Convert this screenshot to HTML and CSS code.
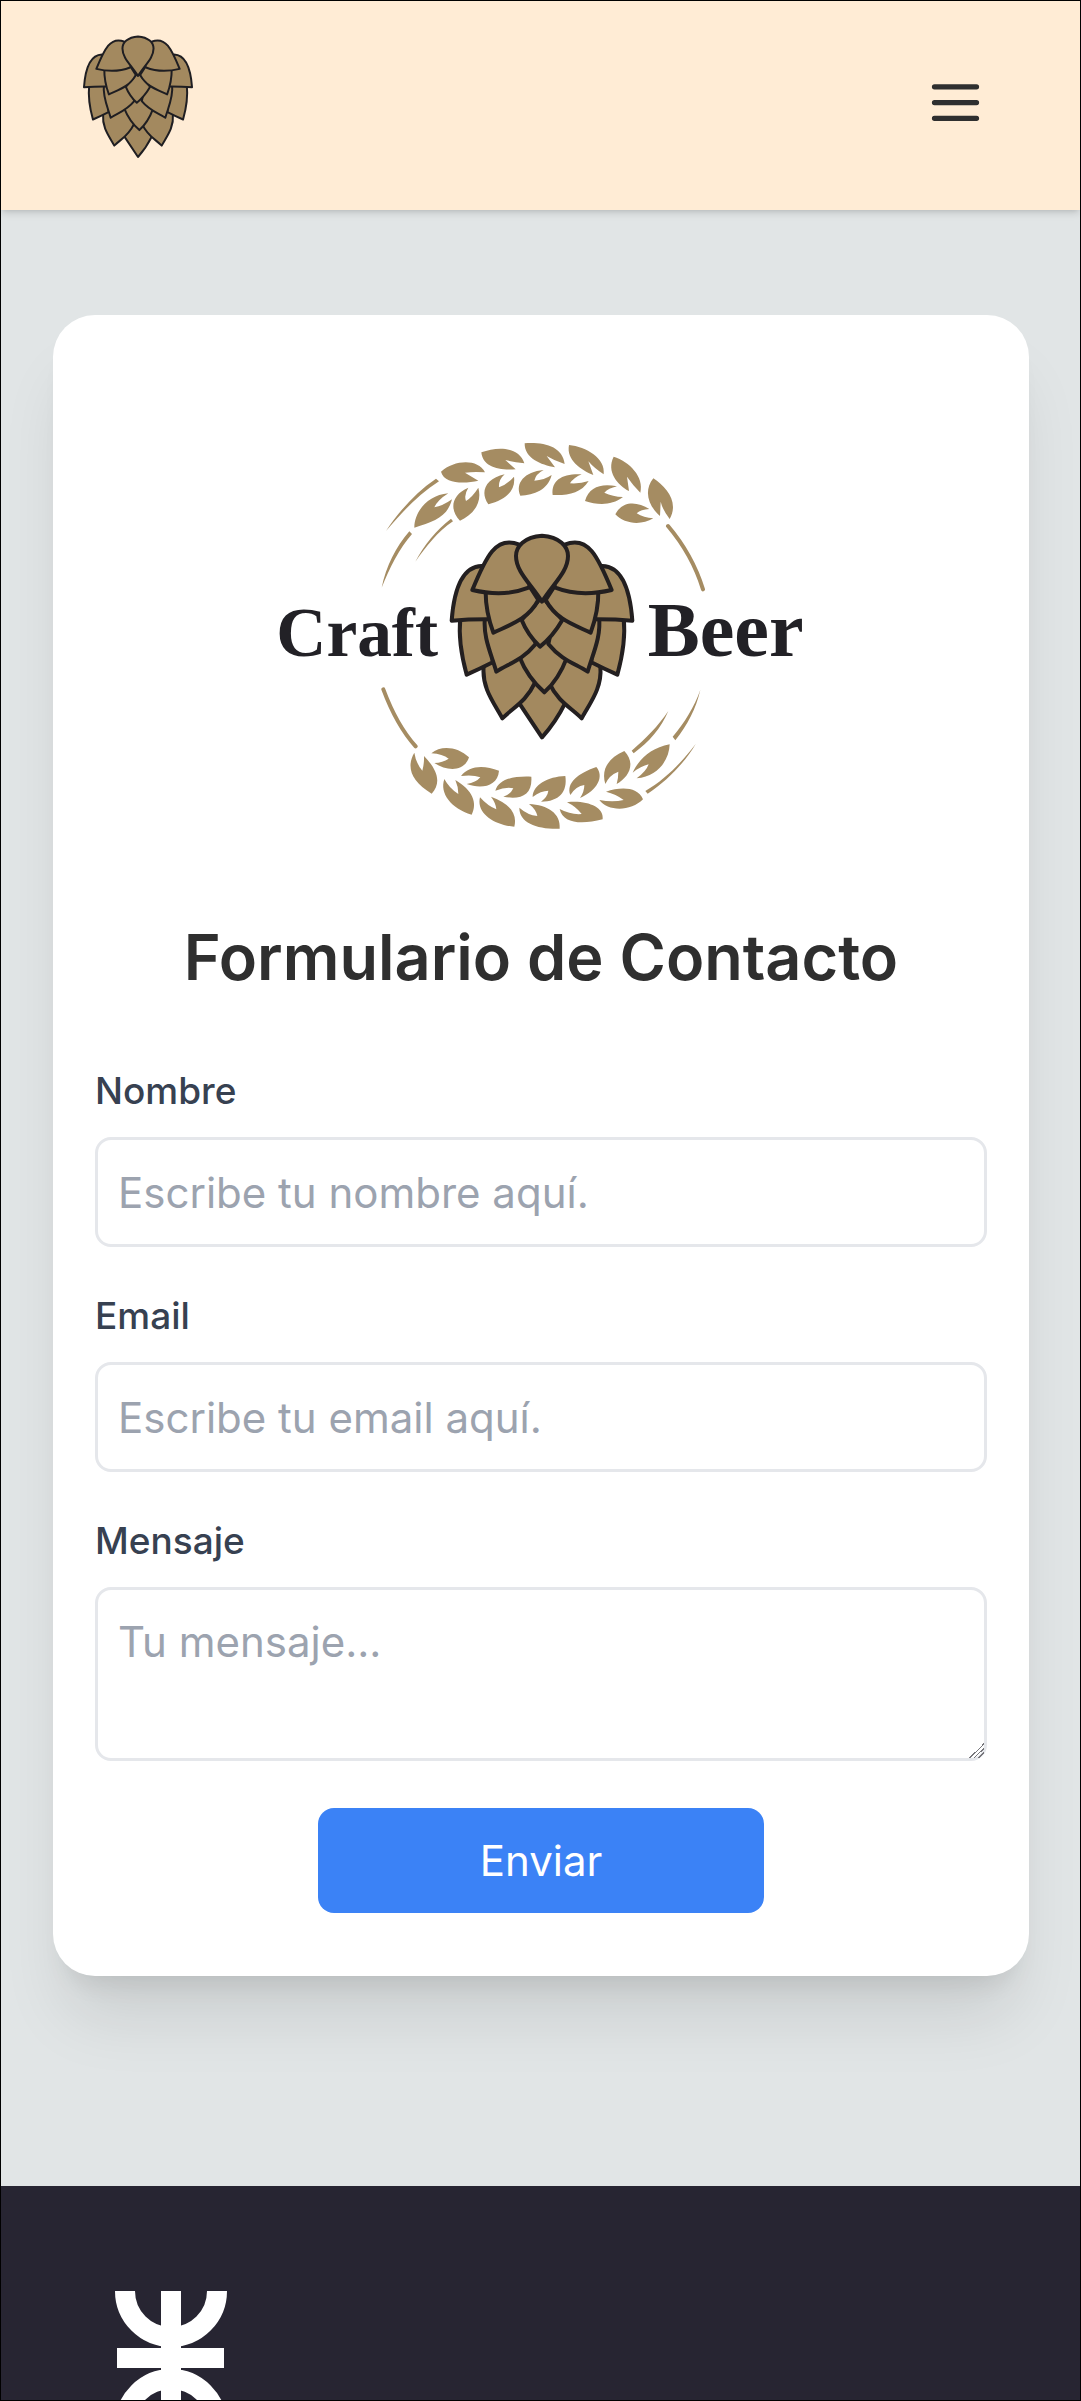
FILE: index.html
```html
<!DOCTYPE html>
<html lang="es">
<head>
  <meta charset="utf-8">
  <meta name="viewport" content="width=device-width, initial-scale=1">
  <title>Craft Beer - Contacto</title>
  <link rel="stylesheet" href="styles.css">
</head>
<body class="page">
  <svg class="sprite" aria-hidden="true">
    <defs>
      <g id="side-low">
        <path d="M724 895C700 850 662 805 668 740L720 640L830 640L822 788C795 845 760 860 724 895Z"/>
        <path d="M617 764C602 710 592 650 598 595L690 590L695 727Q660 745 617 764Z"/>
      </g>
      <g id="side-mid">
        <path d="M706 755C690 700 665 650 672 590L800 560L824 672C785 720 745 730 706 755Z"/>
        <path d="M572 602C578 520 600 440 662 438L710 500L700 598Q630 597 572 602Z"/>
      </g>
      <g id="side-top">
        <path d="M697 638C683 600 673 560 674 510L800 490L832 540C800 600 745 615 697 638Z"/>
        <path d="M634 510C675 410 705 345 775 374L830 430L803 503Q730 532 634 510Z"/>
      </g>
    </defs>
    <symbol id="hop" viewBox="560 330 566 632">
      <path d="M775 850L843 952Q885 905 912 850L843 760Z"/>
      <use href="#side-low"/>
      <use href="#side-low" transform="translate(1686 0) scale(-1 1)"/>
      <path d="M775 710C795 760 820 790 850 817C880 790 900 760 918 712L843 650Z"/>
      <use href="#side-mid"/>
      <use href="#side-mid" transform="translate(1686 0) scale(-1 1)"/>
      <path d="M782 600Q800 645 837 680Q875 650 904 600L843 530Z"/>
      <use href="#side-top"/>
      <use href="#side-top" transform="translate(1686 0) scale(-1 1)"/>
      <path d="M843 347C790 350 765 380 765 408C765 455 808 490 843 545C878 490 921 455 921 408C921 380 896 350 843 347Z"/>
    </symbol>
  </svg>

  <header class="topbar">
    <a class="brand" href="#" aria-label="Craft Beer">
      <svg class="brand-hop" aria-hidden="true"><use href="#hop"/></svg>
    </a>
    <button class="menu-button" type="button" aria-label="Abrir menú">
      <svg class="menu-icon" viewBox="0 0 24 24" aria-hidden="true"><path d="M4 6h16M4 12h16M4 18h16"/></svg>
    </button>
  </header>

  <main class="content">
    <section class="card">
      <svg class="logo" viewBox="0 0 1680 1260" role="img" aria-label="Craft Beer">
        <g class="leaf">
          <path d="M540 155C580 120 650 115 672 157Q640 154 612 158L652 182C610 192 550 192 540 155Z"/>
          <path d="M661 97C710 78 775 80 790 130Q760 127 733 120L764 148C710 152 665 140 661 97Z"/>
          <path d="M791 70C850 66 905 80 911 132Q880 122 857 108L882 142C840 135 790 115 791 70Z"/>
          <path d="M924 75C975 80 1035 115 1028 163Q1000 145 982 124L997 165C960 150 915 120 924 75Z"/>
          <path d="M1058 110C1105 125 1150 170 1138 218Q1115 195 1098 170L1104 213C1070 195 1035 155 1058 110Z"/>
          <path d="M1177 175C1215 200 1255 245 1226 297Q1205 270 1199 245L1197 288C1165 260 1145 215 1177 175Z"/>
          <path d="M460 323C460 275 500 225 562 220Q530 240 520 262Q545 258 573 238C560 290 520 305 460 323Z"/>
          <path d="M597 302C565 270 570 225 622 203Q608 225 615 243Q635 230 652 203C665 250 635 285 597 302Z"/>
          <path d="M682 253C655 215 675 175 731 163Q712 180 714 202Q740 192 759 170C765 215 730 240 682 253Z"/>
          <path d="M778 227C762 190 790 155 848 150Q824 162 820 182Q850 180 872 165C860 210 820 225 778 227Z"/>
          <path d="M875 225C870 180 905 160 962 163Q938 173 927 190Q958 192 983 183C960 220 920 227 875 225Z"/>
          <path d="M972 243C985 200 1020 190 1068 199Q1042 205 1030 218Q1055 230 1086 231C1050 258 1010 255 972 243Z"/>
          <path d="M1063 283C1085 240 1130 245 1165 267Q1140 268 1127 280Q1148 293 1177 295C1140 317 1090 312 1063 283Z"/>
          <path d="M512 1121C450 1085 435 1040 460 998Q465 1030 484 1052Q490 1030 489 1008C525 1045 545 1085 512 1121Z"/>
          <path d="M624 1012C590 980 540 975 511 1000Q545 1002 563 1016Q545 1028 520 1029C560 1055 610 1055 624 1012Z"/>
          <path d="M632 1184C570 1165 535 1120 550 1077Q565 1105 592 1122Q592 1100 583 1080C635 1110 650 1150 632 1184Z"/>
          <path d="M714 1052C670 1035 625 1035 600 1068Q635 1063 658 1072Q645 1088 617 1092C660 1108 710 1100 714 1052Z"/>
          <path d="M760 1220C700 1215 645 1180 657 1132Q680 1158 706 1168Q705 1150 690 1130C745 1150 770 1180 760 1220Z"/>
          <path d="M811 1070C760 1068 715 1075 703 1112Q735 1100 757 1105Q750 1122 727 1130C780 1140 815 1125 811 1070Z"/>
          <path d="M896 1226C830 1228 775 1210 775 1163Q800 1185 829 1188Q825 1168 804 1152C860 1155 900 1180 896 1226Z"/>
          <path d="M913 1068C860 1070 815 1095 815 1131Q840 1112 862 1112Q860 1130 840 1145C895 1145 920 1115 913 1068Z"/>
          <path d="M1025 1198C960 1215 905 1210 896 1167Q930 1185 962 1182Q945 1160 918 1147C975 1140 1030 1160 1025 1198Z"/>
          <path d="M1006 1041C950 1060 915 1090 928 1125Q945 1098 970 1095Q970 1115 957 1134C1010 1110 1030 1070 1006 1041Z"/>
          <path d="M1146 1138C1110 1175 1040 1175 1015 1140Q1055 1148 1088 1140Q1065 1122 1035 1115C1080 1100 1130 1100 1146 1138Z"/>
          <path d="M1090 993C1040 1015 1020 1050 1033 1092Q1045 1065 1072 1055Q1072 1075 1067 1092C1105 1070 1125 1030 1090 993Z"/>
          <path d="M1226 973C1170 985 1135 1015 1115 1058Q1140 1038 1163 1033Q1155 1055 1127 1075C1190 1070 1225 1020 1226 973Z"/>
          <path d="M375 333C410 280 460 220 525 176L534 184C470 225 420 280 375 333Z"/>
          <path d="M463 425C490 375 525 330 570 296L576 304C530 335 495 380 463 425Z"/>
          <path d="M362 503C375 440 405 380 445 334L453 342C415 385 385 445 362 503Z"/>
          <path d="M1112 992C1155 955 1190 920 1222 873C1200 925 1165 965 1118 1000Z"/>
          <path d="M1235 950C1270 910 1300 860 1318 810C1305 865 1280 915 1243 961Z"/>
          <path d="M1153 1113C1210 1080 1260 1030 1304 972C1270 1030 1215 1085 1160 1121Z"/>
        </g>
        <path class="stem" d="M1221 318C1265 370 1305 440 1326 508M367 808C390 870 420 930 464 979"/>
        <use class="logo-hop" href="#hop" x="560" y="330" width="566" height="632"/>
        <text class="logo-word logo-craft" x="46" y="708">Craft</text>
        <text class="logo-word logo-beer" x="1160" y="708">Beer</text>
      </svg>

      <h1 class="title">Formulario de Contacto</h1>

      <form class="form">
        <div class="field">
          <label class="label" for="nombre">Nombre</label>
          <input class="control" id="nombre" type="text" placeholder="Escribe tu nombre aquí.">
        </div>
        <div class="field">
          <label class="label" for="email">Email</label>
          <input class="control" id="email" type="email" placeholder="Escribe tu email aquí.">
        </div>
        <div class="field">
          <label class="label" for="mensaje">Mensaje</label>
          <textarea class="control" id="mensaje" rows="2" placeholder="Tu mensaje..."></textarea>
        </div>
        <button class="submit" type="submit">Enviar</button>
      </form>
    </section>
  </main>

  <footer class="footer">
    <svg class="footer-logo" viewBox="0 0 112 134" role="img" aria-label="UTN">
      <path d="M10 0A46 46 0 0 0 102 0M10 134A46 46 0 0 1 102 134M56 0V134M2 67H109"/>
    </svg>
  </footer>
</body>
</html>
```
FILE: styles.css
```css
*,
*::before,
*::after {
  box-sizing: border-box;
}

html {
  overflow: hidden;
}

.page {
  height: 100vh;
  margin: 0;
  border: 1px solid #000;
  overflow-x: hidden;
  overflow-y: auto;
  scrollbar-width: none;
  background: #e1e5e6;
  color: #2f2f2f;
  font-family: Inter, "Liberation Sans", sans-serif;
}

.sprite {
  position: absolute;
  width: 0;
  height: 0;
}

.topbar {
  position: relative;
  display: flex;
  align-items: center;
  justify-content: space-between;
  padding: 32px 80px 39px;
  background: #ffecd5;
  box-shadow: 0 3px 8px rgba(0, 0, 0, 0.12), 0 3px 5px -3px rgba(0, 0, 0, 0.12);
}

.brand {
  display: block;
  height: 138px;
}

.brand-hop {
  display: block;
  width: 114px;
  height: 126px;
  fill: #a3895f;
  stroke: #1f1e22;
  stroke-width: 10;
  stroke-linejoin: round;
}

.menu-button {
  display: block;
  padding: 13px;
  border: 0;
  background: none;
  color: #2f2f2f;
  cursor: pointer;
}

.menu-icon {
  display: block;
  width: 63px;
  height: 63px;
  fill: none;
  stroke: currentColor;
  stroke-width: 2;
  stroke-linecap: round;
}

.content {
  padding: 105px 51px 210px 52px;
}

.card {
  display: flex;
  flex-direction: column;
  align-items: center;
  padding: 105px 42px 63px;
  border-radius: 42px;
  background: #fff;
  box-shadow: 0 52px 66px -13px rgba(0, 0, 0, 0.1), 0 21px 26px -16px rgba(0, 0, 0, 0.1);
}

.logo {
  width: 560px;
  max-width: 100%;
}

.leaf {
  fill: #a58c62;
}

.stem {
  fill: none;
  stroke: #a58c62;
  stroke-width: 12;
  stroke-linecap: round;
}

.logo-hop {
  fill: #a3895f;
  stroke: #231f20;
  stroke-width: 12;
  stroke-linejoin: round;
}

.logo-word {
  fill: #222126;
  font-family: "Liberation Serif", serif;
  font-weight: 700;
}

.logo-craft {
  font-size: 208px;
}

.logo-beer {
  font-size: 234px;
}

.title {
  margin: 75px 0 65px;
  font-size: 63px;
  font-weight: 600;
  line-height: 84px;
  text-align: center;
}

.form {
  display: flex;
  flex-direction: column;
  gap: 42px;
  width: 100%;
}

.field {
  display: flex;
  flex-direction: column;
  gap: 20px;
}

.label {
  color: #374151;
  font-size: 37px;
  font-weight: 500;
  line-height: 53px;
}

.control {
  display: block;
  width: 100%;
  margin: 0;
  padding: 20px;
  border: 3px solid #e5e7eb;
  border-radius: 16px;
  background: #fff;
  color: #2f2f2f;
  font: inherit;
  font-size: 42px;
  line-height: 64px;
  resize: vertical;
}

input.control {
  height: 110px;
}

.control::placeholder {
  color: #9ca3af;
  opacity: 1;
}

.control::-webkit-resizer {
  background: linear-gradient(135deg, transparent 50%, #77777c 50%, #77777c 56%, transparent 56%, transparent 64%, #77777c 64%, #77777c 70%, transparent 70%, transparent 78%, #77777c 78%, #77777c 84%, transparent 84%);
}

.submit {
  width: 50%;
  margin: 5px auto 0;
  padding: 21px;
  border: 0;
  border-radius: 16px;
  background: #3b82f6;
  color: #fff;
  font: inherit;
  font-size: 42px;
  line-height: 63px;
  cursor: pointer;
}

.footer {
  padding: 105px 114px;
  background: #272532;
}

.footer-logo {
  display: block;
  width: 112px;
  height: 134px;
  fill: none;
  stroke: #fff;
  stroke-width: 20;
}
```
